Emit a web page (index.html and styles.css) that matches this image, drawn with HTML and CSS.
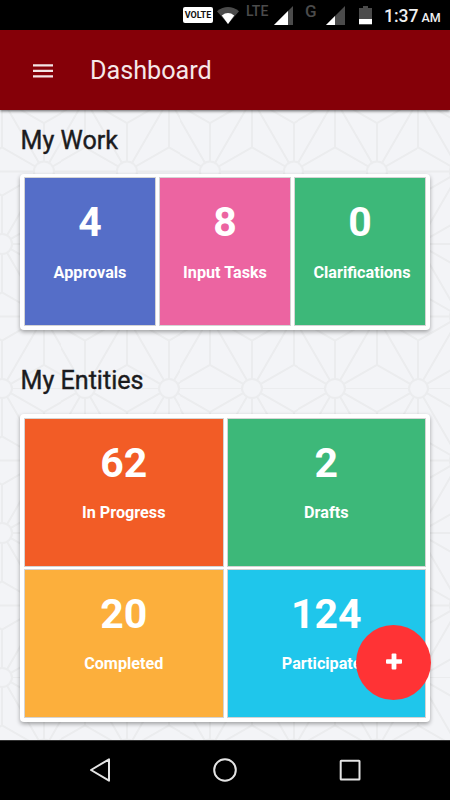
FILE: index.html
```
<!DOCTYPE html>
<html lang="en">

<head>
	<meta charset="UTF-8">
	<meta name="viewport" content="width=device-width, initial-scale=1.0">
	<title>Dashboard</title>
	<link rel="stylesheet" href="styles.css">
</head>

<body>
	<div class="status-bar">
		<span class="volte">VOLTE</span>
		<svg class="wifi" width="22" height="18" viewBox="0 0 22 18">
			<path d="M0 5.2Q11 -3.2 22 5.2L11 18z" fill="#4b4b4b" />
			<path d="M4.8 9.4Q11 4.8 17.2 9.4L11 18z" fill="#fff" />
		</svg>
		<span class="network lte">LTE</span>
		<svg class="signal" width="19" height="19" viewBox="0 0 19 19">
			<path d="M19 0v19H0z" fill="#4b4b4b" />
			<path d="M14 5v14H0z" fill="#fff" />
		</svg>
		<span class="network gprs">G</span>
		<svg class="signal" width="19" height="19" viewBox="0 0 19 19">
			<path d="M19 0v19H0z" fill="#4b4b4b" />
			<path d="M9 10v9H0z" fill="#fff" />
		</svg>
		<svg class="battery" width="13" height="19" viewBox="0 0 13 19">
			<path d="M4 0h5v2h4v17H0V2h4z" fill="#4b4b4b" />
			<path d="M0 13h13v5H0z" fill="#fff" />
		</svg>
		<div class="clock"><span>1:37</span><small>AM</small></div>
	</div>

	<header class="toolbar">
		<svg class="menu" width="20" height="14" viewBox="0 0 20 14">
			<path d="M0 1.3h20M0 6.8h20M0 12.3h20" stroke="#f3e4e5" stroke-width="2.2" />
		</svg>
		<h1>Dashboard</h1>
	</header>

	<main class="content">
		<h2>My Work</h2>
		<div class="card three">
			<div class="tile blue">
				<div class="count">4</div>
				<div class="label">Approvals</div>
			</div>
			<div class="tile pink">
				<div class="count">8</div>
				<div class="label">Input Tasks</div>
			</div>
			<div class="tile green">
				<div class="count">0</div>
				<div class="label wide">Clarifications</div>
			</div>
		</div>

		<h2>My Entities</h2>
		<div class="card two">
			<div class="tile orange">
				<div class="count">62</div>
				<div class="label">In Progress</div>
			</div>
			<div class="tile green">
				<div class="count">2</div>
				<div class="label">Drafts</div>
			</div>
			<div class="tile yellow">
				<div class="count">20</div>
				<div class="label">Completed</div>
			</div>
			<div class="tile cyan">
				<div class="count">124</div>
				<div class="label">Participated</div>
			</div>
		</div>

		<button class="fab" aria-label="Add">
			<svg width="16" height="17" viewBox="0 0 16 17">
				<rect x="5.6" y=".4" width="4.8" height="16.2" rx="1" fill="#fff" />
				<rect x="0" y="6.2" width="16" height="4.6" rx="1" fill="#fff" />
			</svg>
		</button>
	</main>

	<nav class="nav-bar">
		<svg width="24" height="24" viewBox="0 0 24 24">
			<path d="M21 1.3v21.4L3 12z" />
		</svg>
		<svg width="24" height="24" viewBox="0 0 24 24">
			<circle cx="12" cy="12" r="10.8" />
		</svg>
		<svg width="24" height="24" viewBox="0 0 24 24">
			<rect x="2.7" y="2.8" width="18.8" height="18.6" rx=".5" />
		</svg>
	</nav>
</body>

</html>
```
FILE: styles.css
```
* {
	box-sizing: border-box;
	font-family: 'Roboto', sans-serif;
}

body {
	margin: 0;
	height: 800px;
	display: flex;
	flex-direction: column;
	overflow: hidden;
	background: #000;
}

.status-bar {
	height: 30px;
	display: flex;
	align-items: flex-start;
	padding: 6px 0 0 183px;
	color: #f0f0f0;
	flex: none;
}

.status-bar svg {
	flex: none;
}

.volte {
	width: 30px;
	height: 16px;
	margin-top: 1px;
	border-radius: 2px;
	background: #fff;
	color: #111;
	font-size: 9px;
	font-weight: 700;
	line-height: 16px;
	text-align: center;
}

.wifi {
	margin: 0 0 0 4px;
}

.network {
	color: #4b4b4b;
	font-weight: 500;
	line-height: 12px;
}

.lte {
	width: 28px;
	padding-left: 7px;
	font-size: 14px;
	margin-top: -1px;
}

.gprs {
	width: 32px;
	padding-left: 12px;
	font-size: 17px;
	margin-top: -1px;
}

.signal {
	margin-left: 7px;
}

.gprs + .signal {
	margin-left: 1px;
}

.battery {
	margin-left: 14px;
}

.clock {
	display: flex;
	align-items: baseline;
	gap: 3px;
	margin-left: 12px;
	font-size: 17.5px;
	font-weight: 500;
	line-height: 20px;
	white-space: nowrap;
}

.clock small {
	font-size: 12.5px;
}

/* toolbar */
.toolbar {
	position: relative;
	height: 80px;
	flex: none;
	display: flex;
	align-items: center;
	padding: 1px 0 0 33px;
	background: #850008;
	box-shadow: 0 1px 3px rgba(0, 0, 0, 0.6);
	z-index: 1;
}

.toolbar h1 {
	margin: 0 0 0 37px;
	color: #f5e8e9;
	font-size: 25.2px;
	font-weight: 400;
	line-height: 30px;
}

/* content */
.content {
	height: 630px;
	flex: none;
	padding: 15px 20px 0;
	background-color: #f3f4f7;
	background-image: url("data:image/svg+xml,%3Csvg xmlns='http://www.w3.org/2000/svg' width='83.3' height='144.5' viewBox='0 0 833 1445'%3E%3Cg fill='%23f3f4f7' stroke='%23ebecee' stroke-width='20'%3E%3Cpath d='M0 0H833M0 722H833M0 1445H833M0 0L833 1445M833 0L0 1445M0 0L416 241L833 0M416 241V722M0 1445L416 1204L833 1445M416 1204V722M0 0V482L416 722L0 963V1445M833 0V482L416 722L833 963V1445' fill='none'/%3E%3Ccircle r='100'/%3E%3Ccircle cx='833' r='100'/%3E%3Ccircle cy='1445' r='100'/%3E%3Ccircle cx='833' cy='1445' r='100'/%3E%3Ccircle cx='416' cy='722' r='100'/%3E%3C/g%3E%3C/svg%3E");
	background-position: 2px -10.5px;
	background-size: 83.3px 144.5px;
}

.content h2 {
	margin: 0;
	padding-left: 0.5px;
	color: #1b1b1d;
	font-size: 25.1px;
	font-weight: 400;
	line-height: 32px;
	-webkit-text-stroke: 0.4px #1b1b1d;
}

.card {
	display: grid;
	gap: 4px 5px;
	margin: 17px 0 35px;
	padding: 4px 5px 5px;
	border-radius: 4px;
	background: #fff;
	box-shadow: 0 2px 4px rgba(0, 0, 0, 0.35);
}

.three {
	grid-template-columns: repeat(3, 1fr);
}

.two {
	grid-template-columns: repeat(2, 1fr);
	padding-top: 5px;
}

.tile {
	height: 147px;
	padding-top: 20px;
	color: #fff;
	text-align: center;
	font-weight: 700;
	box-shadow: 0 0 0 1px rgba(0, 0, 0, 0.17);
}

.count {
	font-size: 41px;
	line-height: 48px;
}

.label {
	margin-top: 17px;
	font-size: 16.2px;
	line-height: 20px;
}

.two .label {
	margin-top: 16px;
}

.wide {
	padding-left: 4px;
}

.blue {
	background: #556ec8;
}

.pink {
	background: #ec64a1;
}

.green {
	background: #3db879;
}

.orange {
	background: #f25c26;
}

.yellow {
	background: #fcaf3c;
}

.cyan {
	background: #1fc6eb;
}

.fab {
	position: fixed;
	left: 356px;
	top: 625px;
	width: 75px;
	height: 75px;
	border: none;
	border-radius: 50%;
	background: #ff3335;
	display: flex;
	align-items: center;
	justify-content: center;
	padding: 0 0 3px;
}

/* android buttons */
.nav-bar {
	height: 60px;
	display: flex;
	align-items: center;
	justify-content: center;
	gap: 101px;
	padding-bottom: 1px;
	border-top: 1px solid #333;
	background: #000;
}

.nav-bar svg {
	fill: none;
	stroke: #e4e4e4;
	stroke-width: 2;
	stroke-linejoin: round;
}
```
